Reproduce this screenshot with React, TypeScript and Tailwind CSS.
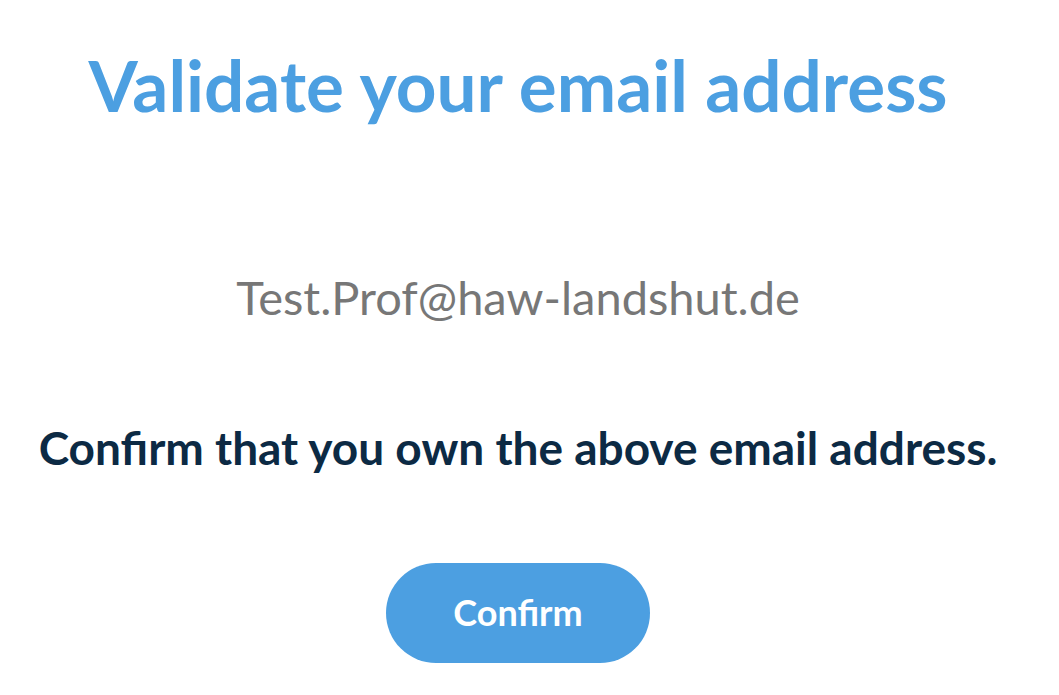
import React from "react";

const App: React.FC = () => {
  return (
    <div className="min-h-screen bg-white font-['Lato',sans-serif]">
      <div className="w-[1036px] flex flex-col items-center pt-[42px]">
        <h1 className="text-[71px] leading-[1.2] font-bold text-[#4c9fe1] whitespace-nowrap">
          Validate your email address
        </h1>
        <p className="mt-[142px] text-[47px] leading-[1.2] text-[#777777] whitespace-nowrap">
          Test.Prof@haw-landshut.de
        </p>
        <p className="mt-[94px] text-[46px] leading-[1.2] font-bold text-[#0c2a44] whitespace-nowrap">
          Confirm that you own the above email address.
        </p>
        <button className="mt-[88px] w-[264px] h-[100px] rounded-full bg-[#4c9fe1] text-white text-[36px] leading-[1.2] font-bold">
          Confirm
        </button>
      </div>
    </div>
  );
};

export default App;
